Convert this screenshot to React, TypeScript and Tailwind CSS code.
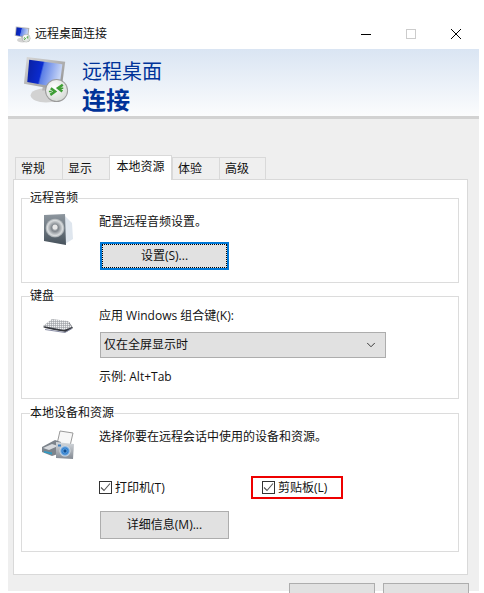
import React from 'react';
import { ChevronDown } from 'lucide-react';

const MonitorIcon = ({ id, size }: { id: string; size: number }) => (
  <svg width={size} height={size} viewBox="0 0 48 50" className="block">
    <defs>
      <linearGradient id={`${id}-screen`} x1="0" y1="0" x2="1" y2="0.2">
        <stop offset="0" stopColor="#0a1f9e" />
        <stop offset="0.45" stopColor="#0a2bd0" />
        <stop offset="0.5" stopColor="#5c7fe6" />
        <stop offset="1" stopColor="#c5d4f6" />
      </linearGradient>
      <linearGradient id={`${id}-frame`} x1="0" y1="0" x2="1" y2="1">
        <stop offset="0" stopColor="#d8d8d8" />
        <stop offset="1" stopColor="#8d8d8d" />
      </linearGradient>
      <radialGradient id={`${id}-badge`} cx="0.4" cy="0.35" r="0.8">
        <stop offset="0" stopColor="#ffffff" />
        <stop offset="1" stopColor="#cfd4cf" />
      </radialGradient>
    </defs>
    <ellipse cx="24" cy="41" rx="16" ry="7.5" fill="#d2d2d2" />
    <path d="M21 30h11l2 6H20z" fill="#b4b4b4" />
    <path d="M4 1l40 5-4 30-39-7z" fill={`url(#${id}-frame)`} />
    <path d="M6.500 4l34.500 4.500-3 24.500L4.500 27z" fill={`url(#${id}-screen)`} />
    <circle cx="35" cy="36" r="12" fill="#9a9a9a" />
    <circle cx="35" cy="36" r="11" fill={`url(#${id}-badge)`} />
    {/* two chevrons facing each other */}
    <path d="M29 33.500l4.500 3.500-5 3.500" fill="none" stroke="#3f9e35" strokeWidth="2.600" />
    <path d="M41.500 30l-5 3.500 4.500 3.500" fill="none" stroke="#3f9e35" strokeWidth="2.600" />
    <path d="M27 37h3M38 33.500h4" fill="none" stroke="#3f9e35" strokeWidth="1.500" />
  </svg>
);

const SpeakerIcon = () => (
  <svg width="30" height="33" viewBox="0 0 30 33" className="block">
    <defs>
      <linearGradient id="spk-box" x1="0" y1="0" x2="0" y2="1">
        <stop offset="0" stopColor="#8e979f" />
        <stop offset="1" stopColor="#47525c" />
      </linearGradient>
      <radialGradient id="spk-cone">
        <stop offset="0" stopColor="#f2f2f2" />
        <stop offset="0.35" stopColor="#7f858b" />
        <stop offset="0.8" stopColor="#d9dcde" />
        <stop offset="1" stopColor="#9aa1a6" />
      </radialGradient>
    </defs>
    <path d="M22 3l7 7 1 16-8 5z" fill="#dfe6ee" />
    <path d="M1 2l21-1 1 31-22-4z" fill="url(#spk-box)" />
    <circle cx="12" cy="15" r="9.500" fill="url(#spk-cone)" />
    <circle cx="12" cy="14" r="2.500" fill="#e8e8e8" />
  </svg>
);

const KeyboardIcon = () => (
  <svg width="32" height="18" viewBox="0 0 32 18" className="block">
    <defs>
      <pattern id="kb-keys" width="2" height="2" patternUnits="userSpaceOnUse">
        <rect width="2" height="2" fill="#9a9da2" />
        <rect width="1.400" height="1.400" fill="#f0f1f2" />
      </pattern>
    </defs>
    <path d="M1 11L11 4l16 2 4 6-7 4-12-2-9-2z" fill="#35373d" />
    <path d="M1 10L10 3l16 2 4 6-8 3z" fill="url(#kb-keys)" />
    <path d="M3 13.500l20 3 7-4" fill="none" stroke="#8a8ea5" strokeWidth="1" />
  </svg>
);

const PrinterIcon = () => (
  <svg width="33" height="30" viewBox="0 0 33 30" className="block">
    <defs>
      <linearGradient id="cam-body" x1="0" y1="0" x2="0" y2="1">
        <stop offset="0" stopColor="#d6dade" />
        <stop offset="1" stopColor="#838a93" />
      </linearGradient>
      <radialGradient id="cam-lens">
        <stop offset="0" stopColor="#cfe6fb" />
        <stop offset="0.55" stopColor="#2c7fd1" />
        <stop offset="1" stopColor="#dce3ea" />
      </radialGradient>
    </defs>
    <path d="M19 1l13 2-3 13-13-2z" fill="#f7f7f7" stroke="#9a9a9a" strokeWidth="1" />
    <path d="M1 17l13-7 6 2v11l-9 3-10-4z" fill="#7d848c" />
    <path d="M2 18l9-4 6 2-9 4z" fill="#d7dade" />
    <path d="M3 21l8 1.500v2l-8-2z" fill="#2f9bc4" />
    <path d="M15 12l18 2-1 15-17-1z" fill="url(#cam-body)" />
    <circle cx="24" cy="21" r="5.500" fill="url(#cam-lens)" />
    <circle cx="24" cy="21" r="1.700" fill="#0f4f94" />
    <rect x="17" y="14.500" width="3" height="2" fill="#3d7fc1" />
  </svg>
);

const GroupBox = ({ title, className, children }: { title: string; className: string; children: React.ReactNode }) => (
  <fieldset className={`w-[438px] border border-[#dcdcdc] ${className}`}>
    <legend className="ml-[8px] leading-4">{title}</legend>
    {children}
  </fieldset>
);

const CheckOption = ({ label }: { label: string }) => (
  <div className="flex items-center">
    <div className="flex h-[13px] w-[13px] items-center justify-center border border-[#333] bg-white">
      <svg width="11" height="11" viewBox="0 0 11 11" className="block">
        <path d="M1 5.500l3 3 6-7" fill="none" stroke="#555" strokeWidth="1.100" />
      </svg>
    </div>
    <span className="ml-[3px] leading-4">{label}</span>
  </div>
);

export default function App() {
  const tabs = ['常规', '显示', '本地资源', '体验', '高级'];

  return (
    <div
      className="h-[593px] w-[484px] overflow-hidden bg-white text-[12px] text-[#111]"
      style={{ fontFamily: '"Open Sans", "Noto Sans CJK SC", sans-serif' }}
    >
      {/* Title bar */}
      <div className="flex h-[49px] items-center pl-[14px] pr-[23px] pt-[19px]">
        <MonitorIcon id="small" size={17} />
        <span className="ml-[4px] leading-4">远程桌面连接</span>
        <div className="ml-auto flex items-center gap-[35px]">
          <svg width="10" height="10" viewBox="0 0 10 10" className="block" shapeRendering="crispEdges">
            <path d="M0 5.500h10" stroke="#000" strokeWidth="1" />
          </svg>
          <svg width="10" height="10" viewBox="0 0 10 10" className="block" shapeRendering="crispEdges">
            <rect x="0.500" y="0.500" width="9" height="9" fill="none" stroke="#cccccc" strokeWidth="1" />
          </svg>
          <svg width="10" height="10" viewBox="0 0 10 10" className="block">
            <path d="M0 0l10 10M10 0L0 10" stroke="#000" strokeWidth="1" />
          </svg>
        </div>
      </div>

      <div className="ml-[8px] h-[542px] w-[471px] bg-[#efefef]">
        {/* Banner */}
        <div className="flex h-[70px] border-b-[3px] border-[#d2d2d2] bg-gradient-to-b from-[#dae5f3] to-[#fbfcfd] pl-[14px] pt-[7px]">
          <MonitorIcon id="large" size={48} />
          <div className="ml-[12px] pt-[3px] text-[#003399]">
            <div className="text-[20px] leading-[26px]">远程桌面</div>
            <div className="text-[24px] font-bold leading-[29px]">连接</div>
          </div>
        </div>

        {/* Tabs */}
        <div className="relative z-10 ml-[7px] mt-[36px] flex h-[25px] items-end">
          {tabs.map((tab) =>
            tab === '本地资源' ? (
              <div
                key={tab}
                className="flex h-[25px] w-[63px] justify-center border border-b-0 border-[#d9d9d9] bg-white pt-[3px] leading-4"
              >
                {tab}
              </div>
            ) : (
              <div
                key={tab}
                className="mb-px h-[22px] w-[47px] border border-b-0 border-r-0 border-[#d9d9d9] bg-[#efefef] pl-[5px] pt-[3px] leading-4 last:border-r"
              >
                {tab}
              </div>
            )
          )}
        </div>

        {/* Panel */}
        <div className="-mt-px ml-[5px] h-[396px] w-[455px] border border-[#d9d9d9] bg-white pl-[7px] pt-[10px]">
          <GroupBox title="远程音频" className="h-[93px]">
            <div className="flex">
              <div className="w-[77px] pl-[21px] pt-[7px]">
                <SpeakerIcon />
              </div>
              <div className="pt-[8px]">
                <div className="leading-4">配置远程音频设置。</div>
                <button className="ml-px mt-[12px] flex h-[28px] w-[129px] items-center justify-center border-2 border-[#0078d7] bg-[#e1e1e1] leading-4 outline-1 -outline-offset-3 outline-dotted outline-black">
                  设置(S)...
                </button>
              </div>
            </div>
          </GroupBox>

          <GroupBox title="键盘" className="mt-[5px] h-[111px]">
            <div className="flex">
              <div className="w-[77px] pl-[20px] pt-[12px]">
                <KeyboardIcon />
              </div>
              <div className="pt-[4px]">
                <div className="leading-4">应用 Windows 组合键(K):</div>
                <div className="ml-px mt-[8px] flex h-[26px] w-[286px] items-center justify-between border border-[#adadad] bg-[#e1e1e1] pl-[3px] pr-[7px] leading-4">
                  <span>仅在全屏显示时</span>
                  <ChevronDown size={14} strokeWidth={1.5} className="text-[#222]" />
                </div>
                <div className="mt-[11px] leading-4">示例: Alt+Tab</div>
              </div>
            </div>
          </GroupBox>

          <GroupBox title="本地设备和资源" className="mt-[6px] h-[147px]">
            <div className="flex">
              <div className="w-[77px] pl-[19px] pt-[9px]">
                <PrinterIcon />
              </div>
              <div className="pt-[8px]">
                <div className="leading-4">选择你要在远程会话中使用的设备和资源。</div>
                <div className="mt-[31px] flex h-[23px] items-center">
                  <div className="w-[152px]">
                    <CheckOption label="打印机(T)" />
                  </div>
                  <div className="flex h-[23px] w-[92px] items-center border-2 border-[#ee0000] pl-[9px]">
                    <CheckOption label="剪贴板(L)" />
                  </div>
                </div>
                <button className="ml-px mt-[12px] flex h-[28px] w-[129px] items-center justify-center border border-[#adadad] bg-[#e1e1e1] leading-4">
                  详细信息(M)...
                </button>
              </div>
            </div>
          </GroupBox>
        </div>

        {/* Dialog buttons, cut off by the bottom edge */}
        <div className="ml-[281px] mt-[8px] flex gap-[8px]">
          <div className="h-[20px] w-[86px] border border-[#adadad] bg-[#e1e1e1]" />
          <div className="h-[20px] w-[86px] border border-[#adadad] bg-[#e1e1e1]" />
        </div>
      </div>
    </div>
  );
}
